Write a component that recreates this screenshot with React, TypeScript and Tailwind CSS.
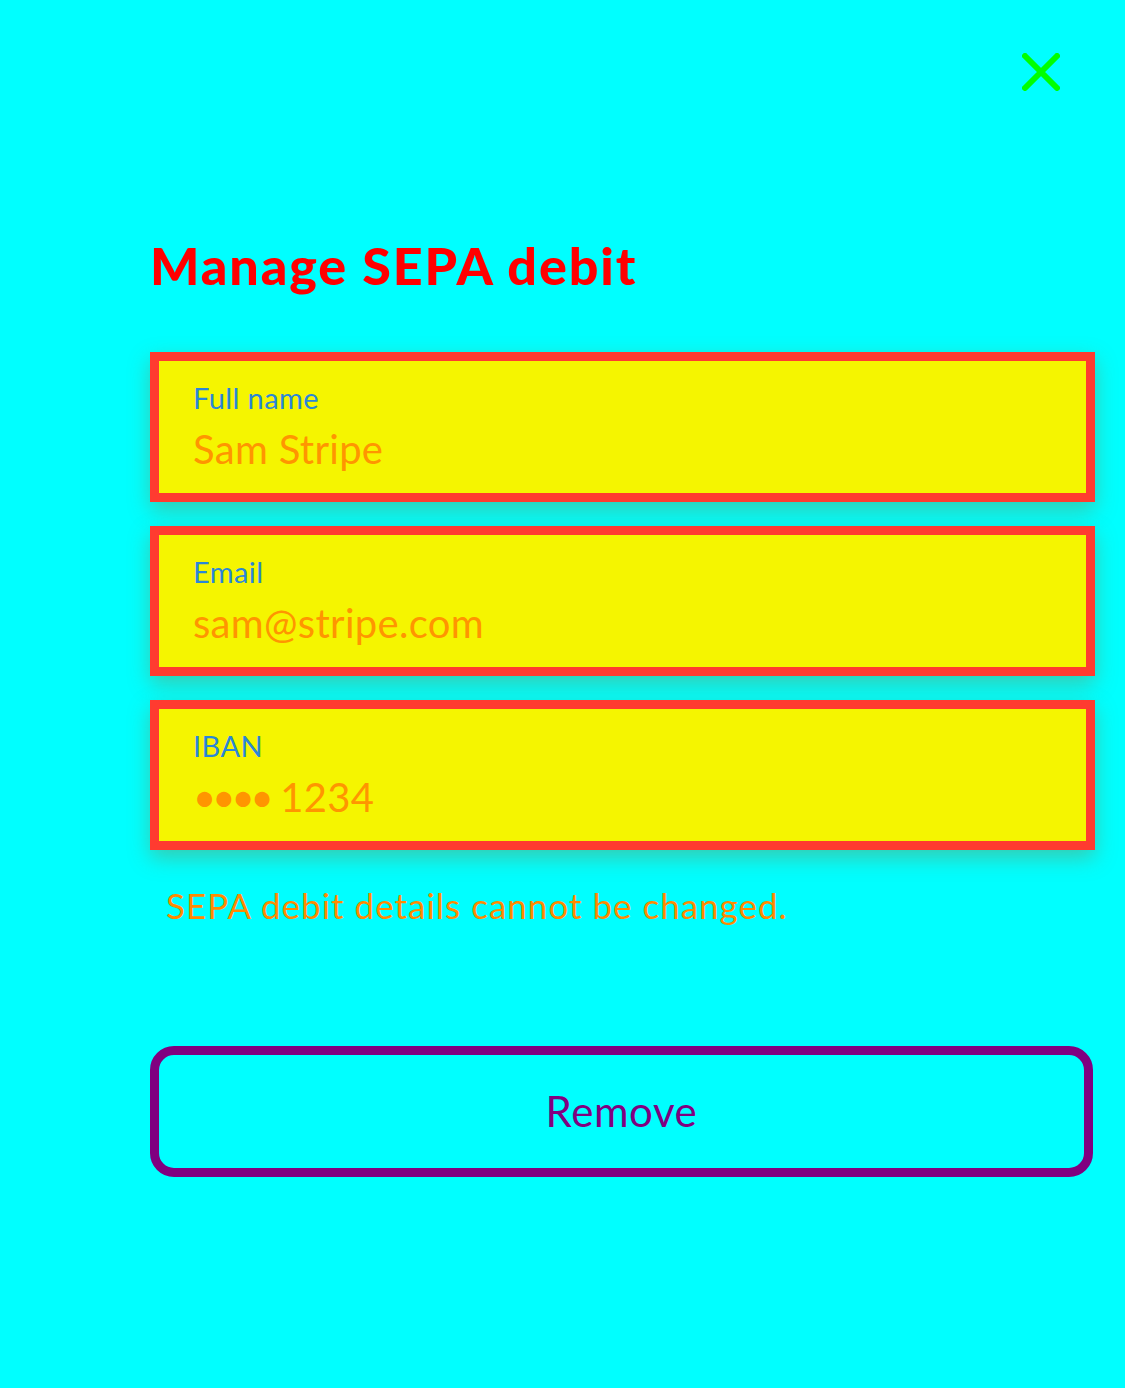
const fields = [
  { label: "Full name", value: "Sam Stripe" },
  { label: "Email", value: "sam@stripe.com" },
  { label: "IBAN", value: "•••• 1234", masked: true },
];

function Field({ label, value, masked }: { label: string; value: string; masked?: boolean }) {
  return (
    <div className="h-[150px] border-[9px] border-[#ff3b30] bg-[#f5f500] px-[34px] pt-[19px] shadow-[0_8px_20px_rgba(120,140,80,0.45)]">
      <div className="text-[29px] leading-[35px] tracking-[0.4px] text-[#2a86d8]">{label}</div>
      <div className="mt-[10px] text-[40px] leading-[48px] tracking-[0.3px] text-[#ff9500]">
        {masked ? (
          <>
            <span className="tracking-[-4px]">••••</span> 1234
          </>
        ) : (
          value
        )}
      </div>
    </div>
  );
}

export default function App() {
  return (
    <div className="min-h-[1388px] w-[1125px] bg-[#00ffff] font-['Lato','Open_Sans',sans-serif]">
      {/* close */}
      <div className="flex justify-end pt-[53px] pr-[65px]">
        <svg width="38" height="38" viewBox="0 0 38 38" fill="none" stroke="#00ff00" strokeWidth="6" strokeLinecap="round">
          <path d="M3 3 35 35M35 3 3 35" />
        </svg>
      </div>

      <div className="pl-[150px] pr-[30px]">
        <h1 className="mt-[142px] text-[52px] font-black leading-[64px] tracking-[1.9px] text-[#ff0000]">Manage SEPA debit</h1>

        <div className="mt-[55px] flex flex-col gap-[24px]">
          {fields.map((f) => (
            <Field key={f.label} {...f} />
          ))}
        </div>

        <p className="mt-[34px] pl-[16px] text-[35px] leading-[42px] tracking-[1px] text-[#ff8a00]">
          SEPA debit details cannot be changed.
        </p>

        <button className="mt-[120px] flex h-[131px] w-[943px] items-center justify-center rounded-[24px] border-[9px] border-[#800080] text-[42px] tracking-[0.6px] text-[#800080]">
          Remove
        </button>
      </div>
    </div>
  );
}
